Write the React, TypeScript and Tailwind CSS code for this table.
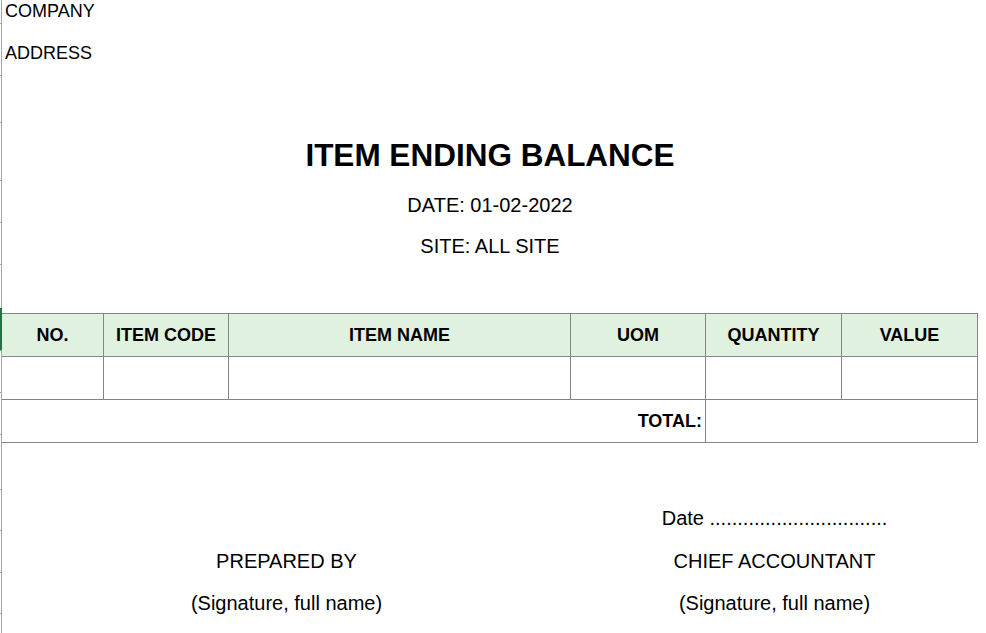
import React from "react";

const segs = [
  "h-[23px]",
  "h-[53px]",
  "h-[48px]",
  "h-[59px]",
  "h-[43px]",
  "h-[43px]",
  "h-[44px]",
  "h-[43px]",
  "h-[43px]",
  "h-[43px]",
  "h-[55px]",
  "h-[42px]",
  "h-[43px]",
  "h-[42px]",
  "h-[20px]",
];

function Gutter() {
  return (
    <div className="flex w-[2px] shrink-0 flex-col">
      {segs.map((h, i) =>
        i === 7 ? (
          <div key={i} className={`${h} w-[2px] bg-[#217346]`} />
        ) : (
          <div key={i} className={`${h} flex`}>
            <div className="flex w-px flex-col">
              {i !== 0 && <div className="h-px bg-[#a6a6a6]" />}
            </div>
            <div className="w-px bg-[#a6a6a6]" />
          </div>
        )
      )}
    </div>
  );
}

const cell = "border-r border-b border-[#858585] flex items-center justify-center h-[43px]";
const head = `${cell} bg-[#e0f1df] font-bold text-[18px] pt-px`;

export default function App() {
  return (
    <div
      className="flex h-[633px] w-[986px] overflow-hidden bg-white text-black"
      style={{ fontFamily: '"Liberation Sans", Arial, sans-serif' }}
    >
      <Gutter />
      <div className="flex w-[976px] flex-col">
        <div className="flex h-[23px] items-center pl-[3px] text-[18px]">COMPANY</div>
        <div className="flex h-[53px] items-center pl-[3px] pt-[7px] text-[18px]">ADDRESS</div>
        <div className="h-[48px]" />
        <div className="flex h-[59px] items-center justify-center pt-[4px] text-[31.5px] font-bold">
          ITEM ENDING BALANCE
        </div>
        <div className="flex h-[43px] items-center justify-center text-[20px]">DATE: 01-02-2022</div>
        <div className="flex h-[43px] items-center justify-center pb-[3px] text-[20px]">SITE: ALL SITE</div>
        <div className="h-[44px]" />
        <div className="grid grid-cols-[102px_125px_342px_135px_136px_136px] border-t border-[#858585]">
          <div className={head}>NO.</div>
          <div className={head}>ITEM CODE</div>
          <div className={head}>ITEM NAME</div>
          <div className={head}>UOM</div>
          <div className={head}>QUANTITY</div>
          <div className={head}>VALUE</div>
          <div className={cell} />
          <div className={cell} />
          <div className={cell} />
          <div className={cell} />
          <div className={cell} />
          <div className={cell} />
          <div className={`${cell} col-span-4 !justify-end pr-[3px] text-[18px] font-bold`}>TOTAL:</div>
          <div className={`${cell} col-span-2`} />
        </div>
        <div className="h-[54px]" />
        <div className="grid grid-cols-[569px_407px] text-[20px]">
          <div className="h-[42px]" />
          <div className="flex h-[42px] items-center justify-center">
            Date ................................
          </div>
          <div className="flex h-[43px] items-center justify-center">PREPARED BY</div>
          <div className="flex h-[43px] items-center justify-center">CHIEF ACCOUNTANT</div>
          <div className="flex h-[42px] items-center justify-center">(Signature, full name)</div>
          <div className="flex h-[42px] items-center justify-center">(Signature, full name)</div>
        </div>
      </div>
    </div>
  );
}
